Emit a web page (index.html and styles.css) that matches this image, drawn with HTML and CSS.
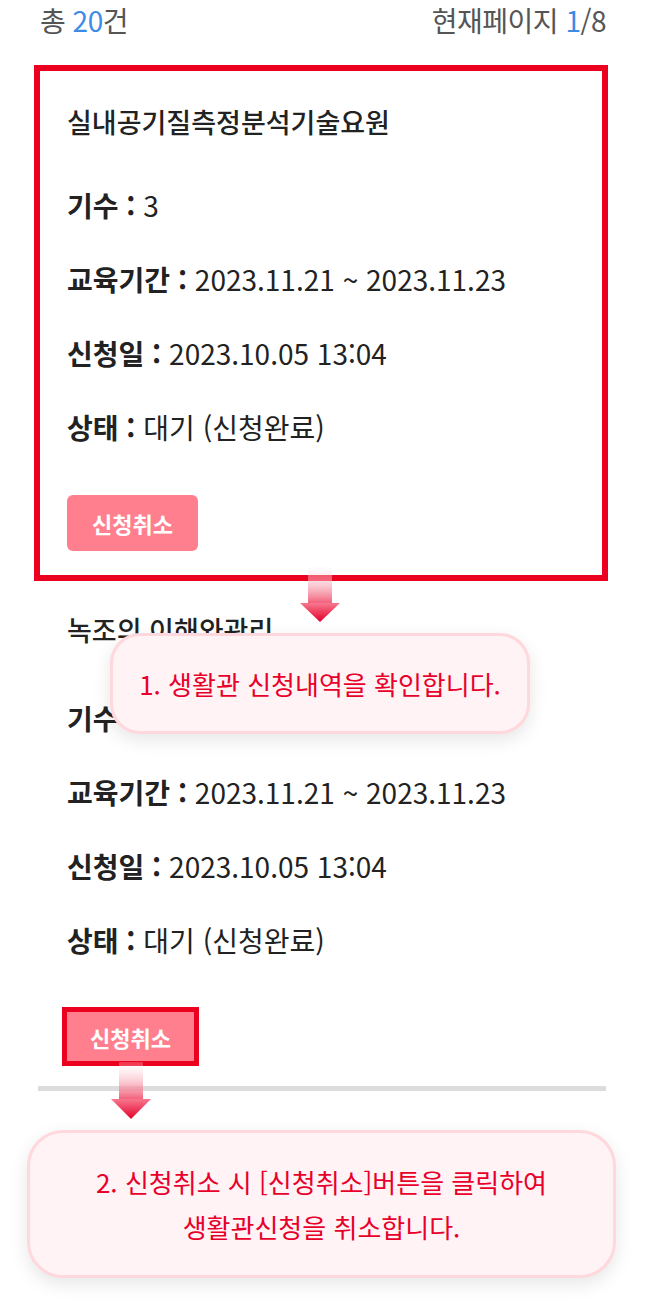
FILE: index.html
```html
<!DOCTYPE html>
<html lang="ko">
<head>
    <meta charset="UTF-8">
    <meta name="viewport" content="width=device-width, initial-scale=1.0">
    <title>생활관 신청내역</title>
    <link rel="stylesheet" href="styles.css">
</head>
<body>

    <div class="page">
        <div class="summary">
            <span>총 <em>20</em>건</span>
            <span>현재페이지 <em>1</em>/8</span>
        </div>

        <!-- 첫번째 신청내역 (강조) -->
        <div class="item item-focus">
            <h3 class="item-title">실내공기질측정분석기술요원</h3>
            <p class="row"><b>기수 :</b> 3</p>
            <p class="row"><b>교육기간 :</b> 2023.11.21 ~ 2023.11.23</p>
            <p class="row"><b>신청일 :</b> 2023.10.05 13:04</p>
            <p class="row"><b>상태 :</b> 대기 (신청완료)</p>
            <button class="cancel-btn">신청취소</button>
        </div>

        <!-- 두번째 신청내역 -->
        <div class="item item-plain">
            <h3 class="item-title">녹조의 이해와관리</h3>
            <p class="row row-first"><b>기수 :</b> 3</p>
            <p class="row"><b>교육기간 :</b> 2023.11.21 ~ 2023.11.23</p>
            <p class="row"><b>신청일 :</b> 2023.10.05 13:04</p>
            <p class="row"><b>상태 :</b> 대기 (신청완료)</p>
            <button class="cancel-btn cancel-marked">신청취소</button>
        </div>

        <div class="divider"></div>

        <div class="callout callout-wide">
            2. 신청취소 시 [신청취소]버튼을 클릭하여<br>
            생활관신청을 취소합니다.
        </div>

        <!-- 안내 말풍선 / 화살표 -->
        <div class="callout callout-float">1. 생활관 신청내역을 확인합니다.</div>

        <svg class="arrow arrow-one" width="40" height="57" viewBox="0 0 40 57">
            <defs>
                <linearGradient id="stemA" x1="0" y1="0" x2="0" y2="1">
                    <stop offset="0" stop-color="#ffffff" stop-opacity="0.2"/>
                    <stop offset="1" stop-color="#f2607a"/>
                </linearGradient>
                <linearGradient id="headA" x1="0" y1="0" x2="0" y2="1">
                    <stop offset="0" stop-color="#f7788e"/>
                    <stop offset="1" stop-color="#e4002b"/>
                </linearGradient>
            </defs>
            <rect x="8" y="0" width="24" height="38" fill="url(#stemA)"/>
            <polygon points="0,38 40,38 20,57" fill="url(#headA)"/>
        </svg>

        <svg class="arrow arrow-two" width="40" height="57" viewBox="0 0 40 57">
            <rect x="8" y="0" width="24" height="37" fill="url(#stemA)"/>
            <polygon points="0,37 40,37 20,57" fill="url(#headA)"/>
        </svg>
    </div>

</body>
</html>
```

FILE: styles.css
```css
body {
    margin: 0;
    background: #fff;
    font-family: "Noto Sans CJK KR", "Noto Sans", sans-serif;
    color: #222;
}

.page {
    position: relative;
    padding: 0 44px 40px 34px;
}

.summary {
    display: flex;
    justify-content: space-between;
    height: 40px;
    line-height: 40px;
    padding: 0 2px 0 6px;
    font-size: 28px;
    color: #555;
    letter-spacing: -0.5px;
}

.summary em {
    font-style: normal;
    color: #3c8ce7;
}

.item {
    margin: 0;
}

.item-focus {
    margin-top: 25px;
    border: 6px solid #ec001f;
    padding: 33px 0 24px 27px;
}

.item-plain {
    padding: 31px 0 0 33px;
}

.item-title {
    margin: 0;
    height: 36px;
    line-height: 36px;
    font-size: 27px;
    font-weight: 500;
}

.row {
    margin: 38px 0 0;
    height: 36px;
    line-height: 36px;
    font-size: 28px;
}

.item-focus .item-title + .row {
    margin-top: 47px;
}

.row-first {
    margin-top: 52px;
}

.row b {
    font-weight: 700;
}

.cancel-btn {
    display: block;
    margin-top: 50px;
    width: 131px;
    height: 56px;
    border: none;
    border-radius: 6px;
    background-color: #ff7f8e;
    color: #fff;
    font-family: inherit;
    font-size: 22px;
    font-weight: 700;
    cursor: pointer;
}

.cancel-marked {
    margin-top: 49px;
    margin-left: -5px;
    width: 137px;
    height: 59px;
    border: 5px solid #ec001f;
    border-radius: 0;
}

.divider {
    margin: 20px 2px 0 4px;
    height: 5px;
    background: #dcdcdc;
}

.callout {
    box-sizing: border-box;
    display: flex;
    align-items: center;
    justify-content: center;
    text-align: center;
    background: #fff3f5;
    border: 3px solid #ffd8de;
    color: #e8002a;
    box-shadow: 0 6px 18px rgba(0, 0, 0, 0.1);
}

.callout-wide {
    margin: 39px -8px 0 -7px;
    height: 148px;
    border-radius: 36px;
    font-size: 26px;
    line-height: 45px;
}

.callout-float {
    position: absolute;
    left: 110px;
    top: 633px;
    width: 420px;
    height: 101px;
    border-radius: 30px;
    font-size: 26px;
}

.arrow {
    position: absolute;
}

.arrow-one {
    left: 300px;
    top: 565px;
}

.arrow-two {
    left: 111px;
    top: 1062px;
}
```
